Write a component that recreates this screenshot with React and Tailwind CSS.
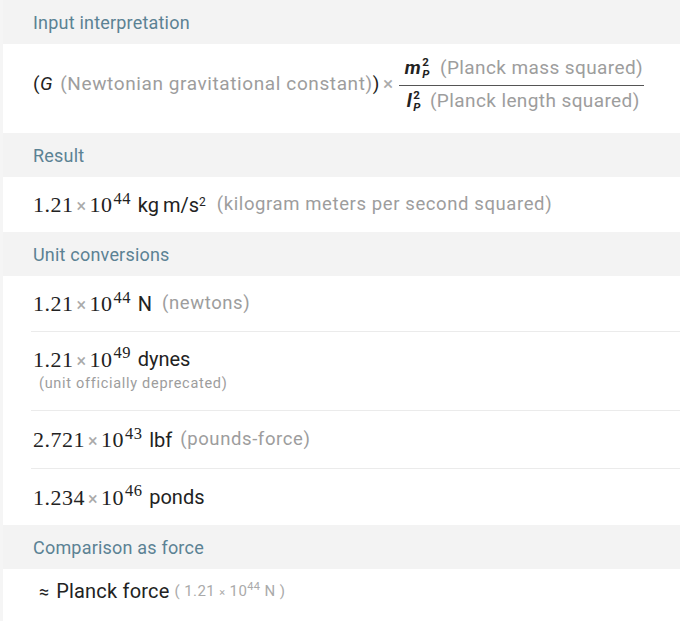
import React from 'react';

const SANS = { fontFamily: 'Roboto, "Noto Sans", sans-serif' };

const Header = ({ children }) => (
  <div className="h-[44px] bg-[#f3f3f3] pl-[30px] flex items-center text-[18px] tracking-[0.2px] text-[#5b8294]">
    {children}
  </div>
);

const Num = ({ mant, exp }) => (
  <span className="font-['Liberation_Serif',serif] text-[22px] tracking-[0.5px] text-[#222] whitespace-nowrap">
    {mant}
    <span className="font-['Roboto',sans-serif] text-[#aaa] text-[18px] mx-[3px]">×</span>
    10<sup className="text-[16.5px] tracking-[0.3px] top-[-0.5em] ml-[1px]">{exp}</sup>
  </span>
);

const Stack = ({ base }) => (
  <span className="text-[#222] italic font-bold text-[19px] inline-flex items-center">
    {base}
    <span className="inline-flex flex-col leading-[12px] text-[11.5px] ml-[1px]">
      <span className="not-italic">2</span>
      <span>P</span>
    </span>
  </span>
);

const Row = ({ children, last }) => (
  <div className={`ml-[28px] ${last ? '' : 'border-b border-[#ebebeb]'}`}>{children}</div>
);

const Gray = ({ children, cls = '' }) => (
  <span className={`text-[#9d9d9d] text-[18.5px] tracking-[0.6px] ${cls}`}>{children}</span>
);

const Unit = ({ children }) => (
  <span className="ml-[7px] text-[#222] text-[20px]">{children}</span>
);

export default function App() {
  return (
    <div className="w-[680px] h-[621px] bg-[#f5f5f5] pl-[3px] overflow-hidden" style={SANS}>
      <div className="bg-white border-b border-[#ececec]">
        <Header>Input interpretation</Header>
        <div className="h-[89px] pl-[30px] pb-[8px] flex items-center text-[19px] tracking-[0.6px] text-[#9d9d9d]">
          <span className="text-[#222]">(<i>G</i></span>
          <span className="ml-[7px]">(Newtonian gravitational constant)</span>
          <span className="text-[#222]">)</span>
          <span className="mx-[3px] text-[#aaa]">×</span>
          <span className="inline-flex flex-col ml-[2px]">
            <span className="pb-[2px] border-b border-[#555] flex items-center pl-[6px] pr-[1px]">
              <Stack base="m" />
              <span className="ml-[10px] tracking-[0.4px]">(Planck mass squared)</span>
            </span>
            <span className="pt-[1px] flex items-center pl-[8px]">
              <Stack base="l" />
              <span className="ml-[9px] tracking-[0.4px]">(Planck length squared)</span>
            </span>
          </span>
        </div>

        <Header>Result</Header>
        <div className="h-[55px] pl-[30px] flex items-center">
          <Num mant="1.21" exp="44" />
          <Unit>kg&#8201;m/s<sup className="text-[12px]">2</sup></Unit>
          <Gray cls="ml-[11px]">(kilogram meters per second squared)</Gray>
        </div>

        <Header>Unit conversions</Header>
        <Row>
          <div className="h-[55px] pl-[2px] flex items-center">
            <Num mant="1.21" exp="44" />
            <Unit>N</Unit>
            <Gray cls="ml-[10px]">(newtons)</Gray>
          </div>
        </Row>
        <Row>
          <div className="h-[78px] pl-[2px] pb-[5px] flex flex-col justify-center">
            <div className="flex items-center">
              <Num mant="1.21" exp="49" />
              <Unit>dynes</Unit>
            </div>
            <div className="text-[14.5px] tracking-[0.7px] text-[#9d9d9d] pl-[6px] -mt-[3px]">(unit officially deprecated)</div>
          </div>
        </Row>
        <Row>
          <div className="h-[57px] pl-[2px] flex items-center">
            <Num mant="2.721" exp="43" />
            <Unit>lbf</Unit>
            <Gray cls="ml-[8px]">(pounds-force)</Gray>
          </div>
        </Row>
        <Row last>
          <div className="h-[56px] pl-[2px] flex items-center">
            <Num mant="1.234" exp="46" />
            <Unit>ponds</Unit>
          </div>
        </Row>

        <Header>Comparison as force</Header>
        <div className="h-[52px] pl-[36px] pb-[8px] flex items-center">
          <span className="text-[#222] text-[18px]">≈</span>
          <span className="ml-[7px] text-[#222] text-[20px] tracking-[0.2px]">Planck force</span>
          <span className="ml-[5px] text-[#aaa] text-[15px] tracking-[0.4px]">
            ( 1.21 <span className="text-[11px]">×</span> 10<sup className="text-[11px]">44</sup> N )
          </span>
        </div>
      </div>
    </div>
  );
}
